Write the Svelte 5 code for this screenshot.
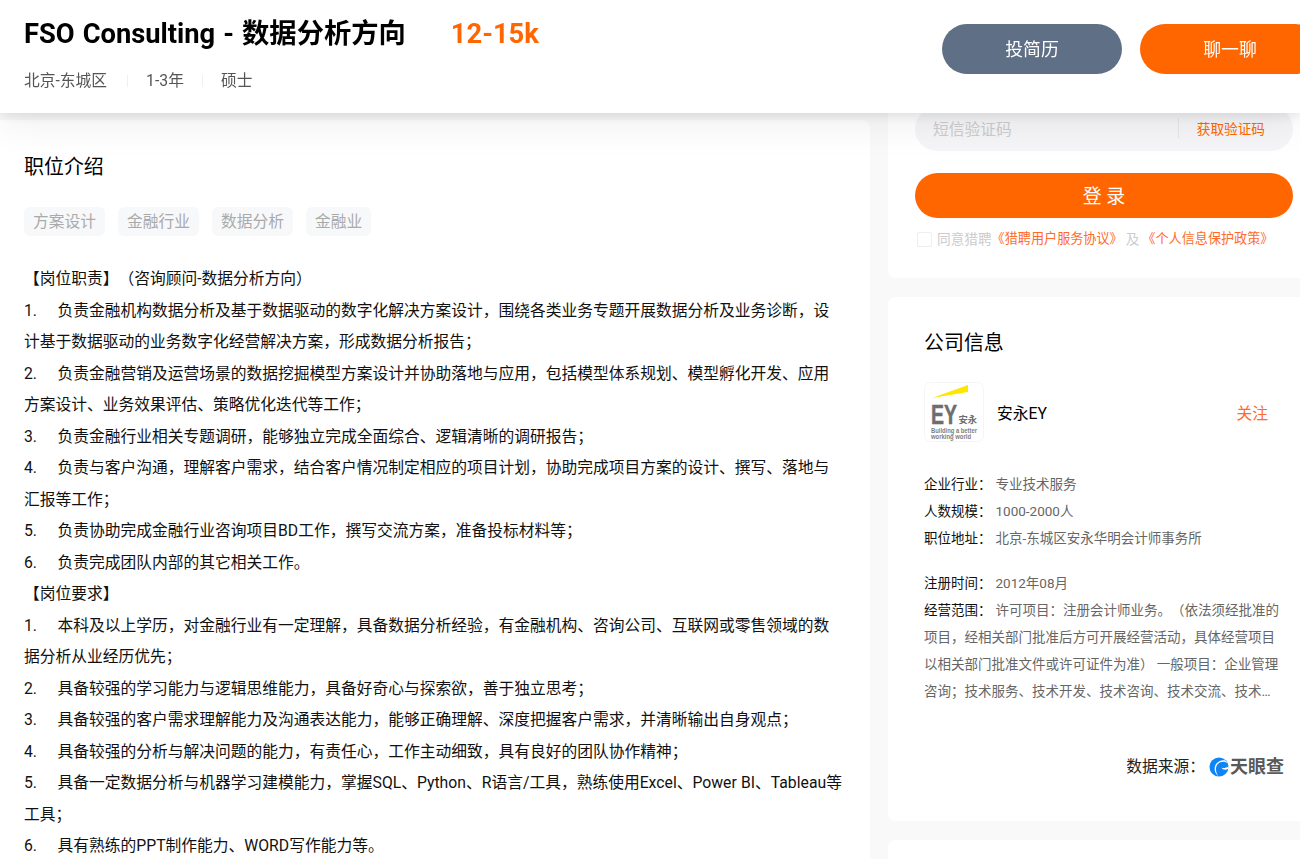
<script lang="ts">
	const tags = ['方案设计', '金融行业', '数据分析', '金融业'];
	const gap = '\u00a0\u00a0\u00a0\u00a0\u00a0';

	const desc = [
		{ n: '', text: '【岗位职责】（咨询顾问-数据分析方向）' },
		{ n: '1.', text: '负责金融机构数据分析及基于数据驱动的数字化解决方案设计，围绕各类业务专题开展数据分析及业务诊断，设计基于数据驱动的业务数字化经营解决方案，形成数据分析报告；' },
		{ n: '2.', text: '负责金融营销及运营场景的数据挖掘模型方案设计并协助落地与应用，包括模型体系规划、模型孵化开发、应用方案设计、业务效果评估、策略优化迭代等工作；' },
		{ n: '3.', text: '负责金融行业相关专题调研，能够独立完成全面综合、逻辑清晰的调研报告；' },
		{ n: '4.', text: '负责与客户沟通，理解客户需求，结合客户情况制定相应的项目计划，协助完成项目方案的设计、撰写、落地与汇报等工作；' },
		{ n: '5.', text: '负责协助完成金融行业咨询项目BD工作，撰写交流方案，准备投标材料等；' },
		{ n: '6.', text: '负责完成团队内部的其它相关工作。' },
		{ n: '', text: '【岗位要求】' },
		{ n: '1.', text: '本科及以上学历，对金融行业有一定理解，具备数据分析经验，有金融机构、咨询公司、互联网或零售领域的数据分析从业经历优先；' },
		{ n: '2.', text: '具备较强的学习能力与逻辑思维能力，具备好奇心与探索欲，善于独立思考；' },
		{ n: '3.', text: '具备较强的客户需求理解能力及沟通表达能力，能够正确理解、深度把握客户需求，并清晰输出自身观点；' },
		{ n: '4.', text: '具备较强的分析与解决问题的能力，有责任心，工作主动细致，具有良好的团队协作精神；' },
		{ n: '5.', text: '具备一定数据分析与机器学习建模能力，掌握SQL、Python、R语言/工具，熟练使用Excel、Power BI、Tableau等工具；' },
		{ n: '6.', text: '具有熟练的PPT制作能力、WORD写作能力等。' }
	];

	const companyInfo = [
		{ label: '企业行业：', value: '专业技术服务' },
		{ label: '人数规模：', value: '1000-2000人' },
		{ label: '职位地址：', value: '北京-东城区安永华明会计师事务所' }
	];
</script>

<header class="job-bar">
	<div class="job-main">
		<div class="job-title">
			<h1>FSO Consulting - 数据分析方向</h1>
			<span class="salary">12-15k</span>
		</div>
		<div class="job-meta">
			<span>北京-东城区</span>
			<i></i>
			<span>1-3年</span>
			<i></i>
			<span>硕士</span>
		</div>
	</div>
	<div class="job-actions">
		<button class="btn-resume">投简历</button>
		<button class="btn-chat">聊一聊</button>
	</div>
</header>

<div class="page">
	<main class="left-card">
		<h2>职位介绍</h2>
		<div class="tags">
			{#each tags as t}
				<span class="tag">{t}</span>
			{/each}
		</div>
		<div class="desc">
			{#each desc as d}
				<p>{d.n ? d.n + gap + d.text : d.text}</p>
			{/each}
		</div>
	</main>

	<aside class="side">
		<section class="card login">
			<div class="code-field">
				<span class="placeholder">短信验证码</span>
				<span class="get-code">获取验证码</span>
			</div>
			<button class="btn-login">登 录</button>
			<div class="agree">
				<span class="check"></span>
				<span>同意猎聘</span>
				<a href="#a">《猎聘用户服务协议》</a>
				<span class="and">及</span>
				<a href="#b">《个人信息保护政策》</a>
			</div>
		</section>

		<section class="card company">
			<h2>公司信息</h2>
			<div class="brand">
				<svg class="ey" width="60" height="60" viewBox="0 0 60 60">
					<rect x="0.5" y="0.5" width="59" height="59" rx="6" fill="#fff" stroke="#f5f5f5" />
					<polygon points="8,16 44,3 44,10" fill="#ffe600" />
					<text x="7" y="42" class="ey-big" textLength="26" lengthAdjust="spacingAndGlyphs">EY</text>
					<text x="34.500" y="41" class="ey-cn">安永</text>
					<text x="7" y="51" class="ey-small" textLength="46" lengthAdjust="spacingAndGlyphs">Building a better</text>
					<text x="7" y="57" class="ey-small" textLength="40" lengthAdjust="spacingAndGlyphs">working world</text>
				</svg>
				<span class="brand-name">安永EY</span>
				<span class="follow">关注</span>
			</div>
			<div class="info first">
				{#each companyInfo as row}
					<div class="info-row"><b>{row.label}</b><span>{row.value}</span></div>
				{/each}
			</div>
			<div class="info second">
				<div class="info-row"><b>注册时间：</b><span>2012年08月</span></div>
				<div class="scope"><b>经营范围：</b><span>许可项目：注册会计师业务。（依法须经批准的项目，经相关部门批准后方可开展经营活动，具体经营项目以相关部门批准文件或许可证件为准） 一般项目：企业管理咨询；技术服务、技术开发、技术咨询、技术交流、技术转让、技术推广；财务咨询；税务服务；信息咨询服务</span></div>
			</div>
			<div class="source">
				<span>数据来源：</span>
				<svg width="20" height="20" viewBox="0 0 20 20">
					<circle cx="10" cy="10" r="9.500" fill="#0f84f4" />
					<path d="M19 6.500C15 3.500 9.500 4.500 7.500 9c-1.200 3-.4 6.800 1.800 10.400C5.500 16 4.800 11.500 6.500 8 8.500 4 13 2.500 16.500 3.500z" fill="#fff" />
					<path d="M19.500 11.500c-2.500 2-6 1.500-7-1 1.500 1 4.500.5 7-1z" fill="#fff" />
				</svg>
				<span class="tyc">天眼查</span>
			</div>
		</section>

		<section class="card next"></section>
	</aside>
</div>

<style>
	:global(body) {
		margin: 0;
		height: 859px;
		overflow: hidden;
		background: #f9f9f9;
		font-family: Roboto, 'Noto Sans CJK SC', sans-serif;
		text-spacing-trim: space-all;
		color: #000;
	}

	button {
		border: none;
		font-family: inherit;
		color: #fff;
		cursor: pointer;
	}

	h1,
	h2,
	p {
		margin: 0;
		font-weight: 400;
	}

	.job-bar {
		position: fixed;
		top: 0;
		left: 0;
		right: 0;
		height: 113px;
		z-index: 5;
		display: flex;
		justify-content: space-between;
		background: #fff;
		box-shadow: 0 2px 12px rgba(0, 0, 0, 0.1), 0 10px 40px rgba(0, 0, 0, 0.07);
		overflow: hidden;
	}

	.job-main {
		padding: 15px 0 0 24px;
	}

	.job-title {
		display: flex;
		align-items: center;
		gap: 45px;
		height: 38px;
	}

	h1 {
		font-size: 27.300px;
		font-weight: 700;
		line-height: 38px;
		word-spacing: 1.300px;
	}

	.salary {
		font-size: 27.300px;
		font-weight: 700;
		color: #ff6600;
	}

	.job-meta {
		display: flex;
		align-items: center;
		margin-top: 15px;
		font-size: 15.750px;
		line-height: 26px;
		color: #555;
	}

	.job-meta span:first-child {
		margin-right: 2px;
	}

	.job-meta i {
		width: 1px;
		height: 12px;
		margin: 0 18px;
		background: #eef0f3;
	}

	.job-actions {
		display: flex;
		gap: 18px;
		padding-top: 24px;
		margin-right: -20px;
	}

	.job-actions button {
		width: 180px;
		height: 50px;
		padding-bottom: 3px;
		border-radius: 25px;
		font-size: 17.850px;
	}

	.btn-resume {
		background: #5f6f85;
	}

	.btn-chat {
		background: #ff6600;
	}

	.page {
		display: flex;
		align-items: flex-start;
		gap: 18px;
		width: 1340px;
	}

	.left-card {
		width: 870px;
		height: 900px;
		flex: none;
		box-sizing: border-box;
		margin-top: 120px;
		padding: 33px 28px 0 24px;
		background: #fff;
		border-radius: 0 8px 8px 0;
	}

	h2 {
		font-size: 19.950px;
		line-height: 28px;
	}

	.tags {
		display: flex;
		gap: 13px;
		margin-top: 26px;
	}

	.tag {
		height: 29px;
		padding: 0 9px;
		border-radius: 6px;
		background: #f7f8fa;
		font-size: 15.750px;
		line-height: 29px;
		color: #aaa;
	}

	.desc {
		margin-top: 27px;
		font-size: 15.750px;
		line-height: 31.500px;
		word-spacing: 0.2px;
		color: #111;
	}

	.side {
		flex: none;
		width: 432px;
		display: flex;
		flex-direction: column;
		gap: 19px;
	}

	.card {
		background: #fff;
		border-radius: 8px;
		box-sizing: border-box;
	}

	.login {
		height: 278px;
		padding: 107px 27px 0;
	}

	.code-field {
		height: 44px;
		box-sizing: border-box;
		display: flex;
		align-items: center;
		justify-content: space-between;
		padding: 0 28px 2px 18px;
		border-radius: 22px;
		background: #f5f5f7;
	}

	.placeholder {
		font-size: 15.750px;
		color: #ccc;
	}

	.get-code {
		position: relative;
		font-size: 13.650px;
		color: #ff6600;
	}

	.get-code::before {
		content: '';
		position: absolute;
		left: -19px;
		top: 0;
		height: 20px;
		width: 1px;
		background: #e6e6e6;
	}

	.btn-login {
		display: block;
		width: 100%;
		height: 45px;
		padding-bottom: 3px;
		margin-top: 22px;
		border-radius: 23px;
		background: #ff6600;
		font-size: 18.900px;
	}

	.agree {
		display: flex;
		align-items: center;
		margin-top: 11px;
		padding-left: 2px;
		font-size: 13.650px;
		line-height: 20px;
		color: #ccc;
		white-space: nowrap;
	}

	.agree a {
		font-size: 13.125px;
		color: #ff6a2b;
		text-decoration: none;
	}

	.and {
		margin: 0 3px;
	}

	.check {
		width: 13px;
		height: 13px;
		margin-right: 5px;
		border: 1px solid #eee;
		border-radius: 2px;
	}

	.company {
		height: 524px;
		padding: 32px 36px 0;
	}

	.brand {
		display: flex;
		align-items: center;
		width: 344px;
		margin-top: 25px;
	}

	.ey {
		flex: none;
	}

	.ey-big {
		font: 700 28px 'Liberation Sans', sans-serif;
		fill: #6d6e71;
		stroke: #6d6e71;
		stroke-width: 0.5;
	}

	.ey-cn {
		font: 700 9.300px 'Noto Sans CJK SC', sans-serif;
		fill: #6d6e71;
	}

	.ey-small {
		font: 700 6.500px 'Liberation Sans', sans-serif;
		fill: #808080;
	}

	.brand-name {
		margin-left: 13px;
		font-size: 15.750px;
	}

	.follow {
		margin-left: auto;
		font-size: 15.750px;
		color: #ff6a2b;
	}

	.info {
		font-size: 13.500px;
		line-height: 27px;
		color: #666;
	}

	.info b {
		font-weight: 400;
		color: #111;
		margin-right: 4px;
	}

	.first {
		margin-top: 29px;
	}

	.second {
		margin-top: 18px;
	}

	.scope {
		width: 356px;
		display: -webkit-box;
		-webkit-box-orient: vertical;
		-webkit-line-clamp: 4;
		overflow: hidden;
	}

	.source {
		display: flex;
		align-items: center;
		justify-content: flex-end;
		width: 360px;
		margin-top: 50px;
		font-size: 15.750px;
		line-height: 24px;
		color: #222;
	}

	.source svg {
		margin-left: 4px;
	}

	.tyc {
		font-size: 18px;
		font-weight: 700;
		color: #595959;
		margin-left: 1px;
	}

	.next {
		height: 100px;
	}
</style>
